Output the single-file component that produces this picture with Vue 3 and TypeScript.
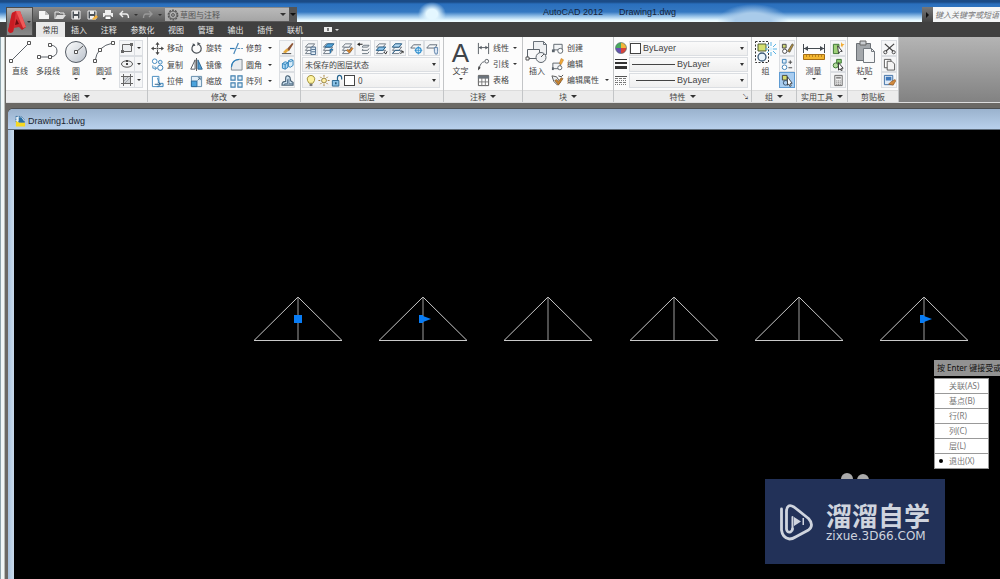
<script setup lang="ts">
import { ref } from 'vue'

interface Tool { label: string; icon: string; arrow?: boolean }

const tabs = ['插入', '注释', '参数化', '视图', '管理', '输出', '插件', '联机']

const quick = [
  { icon: 'new', label: '新建' },
  { icon: 'open', label: '打开' },
  { icon: 'save', label: '保存' },
  { icon: 'saveas', label: '另存为' },
  { icon: 'print', label: '打印' },
]

const drawTools: Tool[] = [
  { label: '直线', icon: 'line' },
  { label: '多段线', icon: 'pline' },
  { label: '圆', icon: 'circle', arrow: true },
  { label: '圆弧', icon: 'arc', arrow: true },
]
const shapeTools = [
  { icon: 'rect', label: '矩形' },
  { icon: 'ellipse', label: '椭圆' },
  { icon: 'hatch', label: '图案填充' },
]

const modifyTools: Tool[] = [
  { label: '移动', icon: 'move' },
  { label: '旋转', icon: 'rotate' },
  { label: '修剪', icon: 'trim', arrow: true },
  { label: '复制', icon: 'copy' },
  { label: '镜像', icon: 'mirror' },
  { label: '圆角', icon: 'fillet', arrow: true },
  { label: '拉伸', icon: 'stretch' },
  { label: '缩放', icon: 'scale' },
  { label: '阵列', icon: 'array', arrow: true },
]
const modifySide = [
  { icon: 'erase', label: '删除' },
  { icon: 'explode', label: '分解' },
  { icon: 'offset', label: '偏移' },
]

const layerGroups = [['layprops'], ['laycur'], ['laymatch', 'layprev'], ['layiso', 'layuniso'], ['layfreeze', 'layoff']]

const annotateTools: Tool[] = [
  { label: '线性', icon: 'linear', arrow: true },
  { label: '引线', icon: 'leader', arrow: true },
  { label: '表格', icon: 'table' },
]
const blockTools: Tool[] = [
  { label: '创建', icon: 'bcreate' },
  { label: '编辑', icon: 'bedit' },
  { label: '编辑属性', icon: 'battr', arrow: true },
]
const groupSide = ['ungroup', 'gedit', 'gselect']
const utilSide = ['qselect', 'selall', 'calc']
const clipSide = ['cut', 'copyclip', 'matchprop']

const apexes = [284, 409, 534, 660, 785, 910]
const grips = [
  { x: 284, arrow: false },
  { x: 409, arrow: true },
  { x: 910, arrow: true },
]

const options = ['关联(AS)', '基点(B)', '行(R)', '列(C)', '层(L)', '退出(X)']
const chosen = ref('退出(X)')
</script>

<template>
  <div class="window">
    <svg class="defs" aria-hidden="true">
      <defs>
        <linearGradient id="blade" x1="0" y1="0" x2="1" y2="1">
          <stop offset="0" stop-color="#f0444a" /><stop offset="1" stop-color="#b01319" />
        </linearGradient>
        <linearGradient id="disc" x1="0" y1="0" x2="1" y2="1">
          <stop offset="0" stop-color="#fff" /><stop offset="1" stop-color="#b9c0ca" />
        </linearGradient>
        <g id="stack" fill="#f4f7fa" stroke="#6d7782" stroke-width="1">
          <path d="M1.500 12.500l3-3.500h7l-3 3.500z" /><path d="M1.500 9l3-3.500h7L8.500 9z" /><path d="M1.500 5.500l3-3.500h7l-3 3.500z" />
        </g>
      </defs>
      <symbol id="logo" viewBox="0 0 18 24">
        <path d="M0 21L4 3l4-2h4l6 16-4 3-3-3-5 1-1 4-3 1z" fill="url(#blade)" />
        <path d="M0 21L4 3l4-2-3 21-3 1z" fill="#c91c23" />
        <path d="M8 1h4l6 16-3 1z" fill="#ef5a59" />
        <path d="M8.500 9l2.500 5-4 1z" fill="#6d0d11" />
      </symbol>
      <symbol id="new" viewBox="0 0 12 10"><path d="M1 1h6l4 4v4H1z" fill="#f4f4f4" /><path d="M7 1v4h4" fill="#bbb" /></symbol>
      <symbol id="open" viewBox="0 0 12 10"><path d="M1 9V2h4l1 1h4v2" fill="none" stroke="#e6e6e6" /><path d="M3 5h9L9 9H1z" fill="#dedede" /></symbol>
      <symbol id="save" viewBox="0 0 12 10"><path d="M2 1h8v8H2z" fill="#4b5157" stroke="#eee" /><path d="M4 1h4v3H4zM4 6h4v3H4z" fill="#eee" /></symbol>
      <symbol id="saveas" viewBox="0 0 12 10"><path d="M2 1h8v8H2z" fill="#4b5157" stroke="#eee" /><path d="M4 1h4v3H4zM4 6h4v3H4z" fill="#eee" /><path d="M6 9l4-4 2 2-4 3z" fill="#f2b03d" /></symbol>
      <symbol id="print" viewBox="0 0 12 10"><path d="M3 0h6v3H3zM1 3h10v4H1z" fill="#eee" /><path d="M3 6h6v3.500H3z" fill="#fff" stroke="#555" /></symbol>
      <symbol id="undo" viewBox="0 0 12 10"><path d="M5 1L2 4l3 3M2.500 4H8q2.500 0 2.500 4" fill="none" stroke="#eee" stroke-width="1.400" /></symbol>
      <symbol id="redo" viewBox="0 0 12 10"><path d="M7 1l3 3-3 3M9.500 4H4Q1.500 4 1.500 8" fill="none" stroke="#999" stroke-width="1.400" /></symbol>
      <symbol id="gear" viewBox="0 0 12 12"><circle cx="6" cy="6" r="4.800" fill="none" stroke="#555" stroke-width="1.200" stroke-dasharray="2 1" /><circle cx="6" cy="6" r="3.900" fill="none" stroke="#555" stroke-width=".8" /><circle cx="6" cy="6" r="1.400" fill="none" stroke="#555" /></symbol>

      <symbol id="line" viewBox="0 0 24 24"><path d="M3 21L21 3" stroke="#5c6269" fill="none" /><path d="M1.500 19.500h3v3h-3zM19.500 1.500h3v3h-3z" fill="#fff" stroke="#555" /></symbol>
      <symbol id="pline" viewBox="0 0 24 24"><path d="M3 17h12q6-1 6-6t-6-6" stroke="#5c6269" fill="none" /><path d="M1.500 15.500h3v3h-3zM12.500 15.500h3v3h-3zM12.500 3.500h3v3h-3z" fill="#fff" stroke="#555" /></symbol>
      <symbol id="circle" viewBox="0 0 24 24"><circle cx="12" cy="12" r="10.500" fill="url(#disc)" stroke="#555c65" /><path d="M12 12l7-6" stroke="#555" /><path d="M10.500 10.500h3v3h-3z" fill="#fff" stroke="#555" /></symbol>
      <symbol id="arc" viewBox="0 0 24 24"><path d="M3 21Q5 6 21 3" stroke="#5c6269" fill="none" /><path d="M1.500 19.500h3v3h-3zM6.500 8.500h3v3h-3zM19.500 1.500h3v3h-3z" fill="#fff" stroke="#555" /></symbol>
      <symbol id="rect" viewBox="0 0 14 12"><path d="M2.500 2.500h9v7h-9z" fill="#eceef0" stroke="#666" /><path d="M1 8h3v3H1zM10 1h3v3h-3z" fill="#666" /></symbol>
      <symbol id="ellipse" viewBox="0 0 14 12"><ellipse cx="7" cy="6" rx="5.500" ry="3.200" fill="#f2f3f4" stroke="#555" /><path d="M6 5h2v2H6zM6 2h2v2H6z" fill="#444" /></symbol>
      <symbol id="hatch" viewBox="0 0 14 12"><path d="M3 2h8v8H3z" fill="#d2d5d8" /><path d="M3.500 0v12M10.500 0v12M1 2.500h12M1 9.500h12" stroke="#666" fill="none" /><path d="M4 7l4-4M5 9l5-5" stroke="#8b9096" stroke-width=".7" /></symbol>

      <symbol id="move" viewBox="0 0 14 14"><path d="M7 2v10M2 7h10" stroke="#444" stroke-dasharray="3.500 3" /><path d="M7 0l2.200 3H4.800zM7 14l2.200-3H4.800zM0 7l3-2.200v4.400zM14 7l-3-2.200v4.400z" fill="#444" /><path d="M6 6h2v2H6z" fill="#444" /></symbol>
      <symbol id="rotate" viewBox="0 0 14 14"><path d="M5 2.500A5 5 0 1 0 10 3" fill="none" stroke="#4d5359" stroke-width="1.300" /><path d="M8 0v4L11.500 2zM6 4L3 1v3.500z" fill="#4d5359" /></symbol>
      <symbol id="trim" viewBox="0 0 14 14"><path d="M0 7h5" stroke="#2d78b4" stroke-width="1.300" /><path d="M8 7h6" stroke="#5b8fb5" stroke-dasharray="3 1" /><path d="M4 13L9 1" stroke="#4b89ba" stroke-width="1.300" /></symbol>
      <symbol id="copy" viewBox="0 0 14 14"><circle cx="4" cy="3.500" r="2.500" fill="#fff" stroke="#3e86bd" /><circle cx="10" cy="4.500" r="2" fill="#e3edf6" stroke="#3e86bd" /><circle cx="10" cy="10.500" r="2.800" fill="#fff" stroke="#2f78b2" /><path d="M2 8v3h4M4 9l2 2-2 2" fill="none" stroke="#3e86bd" /></symbol>
      <symbol id="mirror" viewBox="0 0 14 14"><path d="M5.500 2v10H.8z" fill="#fff" stroke="#4b5157" /><path d="M8.500 2v10h4.700z" fill="#4c9bd2" stroke="#2d648e" /><path d="M7 0v14" stroke="#555" /></symbol>
      <symbol id="fillet" viewBox="0 0 14 14"><path d="M1.500 13V10Q2 2 10 1.500h3V13z" fill="#e8ebee" stroke="#7b848c" /><path d="M1.500 10Q2 2 10 1.500" fill="none" stroke="#2b80bd" stroke-width="1.200" /></symbol>
      <symbol id="stretch" viewBox="0 0 14 14"><path d="M1.500 1.500h7v11h-7z" fill="#fff" stroke="#4389bd" /><path d="M7 3l2 6h4v3.500H6" fill="#dfeaf3" stroke="#337eb5" /><path d="M4 10h6M8 8l2 2-2 2" fill="none" stroke="#275f8a" /></symbol>
      <symbol id="scale" viewBox="0 0 14 14"><path d="M1.500 1.500h11v11h-11z" fill="#e3eff8" stroke="#5d87a8" /><path d="M1.500 6.500h6v6h-6z" fill="#4ba3dc" stroke="#2a6998" /><path d="M8 6l3-3M8.500 3H11v2.500" fill="none" stroke="#4c6e88" /></symbol>
      <symbol id="array" viewBox="0 0 14 14"><g fill="#e4eff7" stroke="#3e7eae" stroke-width="1.200"><path d="M1 1h4.500v4.500H1zM8.500 1H13v4.500H8.500zM1 8.500h4.500V13H1zM8.500 8.500H13V13H8.500z" /></g></symbol>
      <symbol id="erase" viewBox="0 0 14 14"><path d="M6 8l6-7 1.500 1-5 8z" fill="#8c5334" /><path d="M2 11l4-4 2.500 2L5 12z" fill="#e3a83b" /><path d="M1 12.500h10" stroke="#444" /></symbol>
      <symbol id="explode" viewBox="0 0 14 14"><path d="M1.500 6l3-2 3 1v5l-3 2-3-1z" fill="#a9d6f3" stroke="#2d82bb" /><path d="M8 3l3-1.500 2 1V8l-3 2-2-1z" fill="#d7ecf9" stroke="#2d82bb" /><path d="M1.500 6l3 1 3-2M4.500 7v5M8 3l2 1 3-1.500" fill="none" stroke="#2d82bb" /></symbol>
      <symbol id="offset" viewBox="0 0 14 14"><path d="M1 12h12V9q-3-.5-3-3.500T7.500 2 5 5v3q-4 0-4 4z" fill="#cfe4f3" stroke="#4b6478" stroke-width="1.200" /><path d="M4 12v-1.500h3V6q.8-1.500 1.500 0v4.500H13" fill="none" stroke="#55738c" /></symbol>

      <symbol id="layprops" viewBox="0 0 14 14"><use href="#stack" /><path d="M7.500 5.500h5v8h-5z" fill="#e5f0f8" stroke="#47698a" /><path d="M8 8h4M8 10.500h4" stroke="#47698a" /></symbol>
      <symbol id="laycur" viewBox="0 0 14 14"><use href="#stack" /><path d="M3 5.500l3-3.500h7l-3 3.500z" fill="#53a7dd" stroke="#27628f" /><path d="M9 12V8h3" fill="none" stroke="#2c78af" stroke-width="1.500" /></symbol>
      <symbol id="laymatch" viewBox="0 0 14 14"><use href="#stack" /><path d="M6 9l3 3 4-5-1-1-3 3-2-1z" fill="#d98a30" stroke="#8f5520" stroke-width=".6" /></symbol>
      <symbol id="layprev" viewBox="0 0 14 14"><path d="M5.500 5.500l1.500-2h6l-1.500 2zM5.500 9l1-1.500M5.500 9h6L13 7M5.500 12.500h6l1.500-2" fill="none" stroke="#65707a" /><path d="M0 2.500L3 .5V2h3v1H3v1.500z" fill="#222" /></symbol>
      <symbol id="layiso" viewBox="0 0 14 14"><use href="#stack" /><path d="M1.500 9l3-3.500h7L8.500 9z" fill="#8ec5ea" stroke="#27628f" /><path d="M10 11l1.500 2 1.500-3" fill="none" stroke="#222" /></symbol>
      <symbol id="layuniso" viewBox="0 0 14 14"><use href="#stack" /><path d="M1.500 5.500l3-3.500h7l-3 3.500z" fill="#b9dcf3" stroke="#27628f" /><path d="M1.500 12.500l3-3.500h5" fill="none" stroke="#27628f" /><path d="M10 13l3-3M11 10h2v2" fill="none" stroke="#222" /></symbol>
      <symbol id="layfreeze" viewBox="0 0 14 14"><path d="M.8 6.500l3-3.500h8" fill="none" stroke="#5d6772" /><path d="M.8 6.500h5" stroke="#5d6772" /><circle cx="9" cy="9" r="3" fill="#d8edfa" stroke="#2f8fce" stroke-width="1.200" /><path d="M9 4.500v9M4.800 9h8.500" stroke="#2f8fce" stroke-width=".8" /></symbol>
      <symbol id="layoff" viewBox="0 0 14 14"><path d="M.8 6.500l3-3.500h8l-2 3.500z" fill="#f6f8fa" stroke="#5d6772" /><path d="M9 6h3.500v4L12 13h-2l-1-3z" fill="#dce7f5" stroke="#5b80a8" /></symbol>
      <symbol id="bulb" viewBox="0 0 12 14"><path d="M4 10Q1.500 7 2 4.500 3 1.500 6 1.500t4 3Q10.500 7 8 10z" fill="#fdf2a0" stroke="#a08f35" /><path d="M4.500 10.500h3v2.500h-3z" fill="#777" /></symbol>
      <symbol id="sun" viewBox="0 0 12 14"><circle cx="6" cy="7" r="2.600" fill="#fff0a8" stroke="#8f7a38" /><path d="M6 1v2M6 11v2M0 7h2M10 7h2M2 3l1.300 1.300M10 3L8.700 4.300M2 11l1.300-1.300M10 11L8.700 9.700" stroke="#a37b2c" /></symbol>
      <symbol id="lock" viewBox="0 0 12 14"><path d="M1 7h7v6H1z" fill="#8cc4e8" stroke="#27658f" /><path d="M6.500 7V4q0-2.500 2.200-2.500T11 4v2" fill="none" stroke="#27658f" stroke-width="1.300" /><path d="M4 9h1.500v2H4z" fill="#164766" /></symbol>

      <symbol id="linear" viewBox="0 0 14 14"><path d="M1.500 1v12M12.500 1v12M2 6h10" stroke="#555b61" /><path d="M2 6l3-2v4zM12 6L9 4v4z" fill="#555b61" /></symbol>
      <symbol id="leader" viewBox="0 0 14 14"><path d="M2 12Q4 4 8 4" fill="none" stroke="#555b61" /><circle cx="10.500" cy="3.500" r="2" fill="#fff" stroke="#555b61" /><path d="M1 13.500L1.500 9l2.500 1.500z" fill="#444" /></symbol>
      <symbol id="table" viewBox="0 0 14 14"><path d="M1.500 1.500h11v11h-11z" fill="#fff" stroke="#555" /><path d="M1 2h12v3H1z" fill="#6b737b" /><path d="M1 8.500h12M5.200 4v9M9 4v9" stroke="#777" /></symbol>
      <symbol id="insert" viewBox="0 0 24 24"><path d="M8.500 1.500h10l3 3v10h-13z" fill="#eef0f2" stroke="#6a727a" /><path d="M18.500 1.500v3h3" fill="none" stroke="#6a727a" /><path d="M2.500 9.500h12v9h-12z" fill="#f8f9fa" stroke="#5d656d" /><circle cx="16" cy="17.500" r="5" fill="#f1f3f5" stroke="#5d656d" /><path d="M1 17h3v3H1zM16 17l3-3" fill="#fff" stroke="#555" /></symbol>
      <symbol id="bcreate" viewBox="0 0 14 14"><path d="M3 2.500h9v6H3z" fill="#f2f4f6" stroke="#5b636b" /><circle cx="10" cy="9.500" r="2.700" fill="#fff" stroke="#5b636b" /><path d="M1 8h3v3H1z" fill="#5b636b" /></symbol>
      <symbol id="bedit" viewBox="0 0 14 14"><path d="M2 5.500h8v6H2z" fill="#f2f4f6" stroke="#5b636b" /><circle cx="9.500" cy="10.500" r="2.200" fill="#fff" stroke="#5b636b" /><path d="M1 10h2v3H1z" fill="#5b636b" /><path d="M9 6l2-5.500L13.500 2 11 7z" fill="#f0ab38" stroke="#bd7420" stroke-width=".6" /></symbol>
      <symbol id="battr" viewBox="0 0 14 14"><path d="M1 2l5 1 4 6-3 3-4-4z" fill="#eceff1" stroke="#555" /><path d="M4 7l4 5 5-7-2-1-3 4-2-2z" fill="#c5812f" stroke="#6d4a22" stroke-width=".6" /><path d="M8 2l3 1 2-2" fill="none" stroke="#444" /></symbol>

      <symbol id="wheel" viewBox="0 0 12 12"><path d="M6 6V.5A5.500 5.500 0 0 1 11.500 6z" fill="#f1b53a" /><path d="M6 6h5.500A5.500 5.500 0 0 1 6 11.500z" fill="#d9433a" /><path d="M6 6v5.500A5.500 5.500 0 0 1 .5 6z" fill="#6753ae" /><path d="M6 6H.5A5.500 5.500 0 0 1 6 .5z" fill="#49a95d" /><circle cx="6" cy="6" r="5.500" fill="none" stroke="#466" stroke-width=".6" /></symbol>
      <symbol id="weights" viewBox="0 0 12 12"><path d="M0 1.500h12" stroke="#333" /><path d="M0 5h12" stroke="#333" stroke-width="2" /><path d="M0 9.500h12" stroke="#333" stroke-width="3" /></symbol>
      <symbol id="ltypes" viewBox="0 0 12 12"><path d="M0 2.500h12" stroke="#555" /><path d="M0 4.500h12M0 8.500h12" stroke="#777" stroke-dasharray="3 1" /><path d="M0 6.500h12M0 10.500h12" stroke="#777" stroke-dasharray="1 1" /></symbol>

      <symbol id="group" viewBox="0 0 24 24"><path d="M1.500 1.500h13v21h-13z" fill="none" stroke="#333" stroke-dasharray="2 1.500" /><path d="M4 4h8v7H4z" fill="#d5df6f" stroke="#4e5d33" /><circle cx="8" cy="17" r="4" fill="#eaf4fb" stroke="#3a5875" stroke-width="1.300" /><path d="M17 2v4M17 12v4M11 9h3M19 9h4M19 7l3-3M19 11l3 3M15 7l-2-3M15 11l-2 2" stroke="#58b2e4" /><circle cx="17" cy="9" r="1.800" fill="#d9f1fd" /></symbol>
      <symbol id="ungroup" viewBox="0 0 14 14"><path d="M1.500 2.500h4v4h-4z" fill="#cfd877" stroke="#444" /><circle cx="4" cy="10" r="2.300" fill="#fff" stroke="#444" /><path d="M7 10l5-8 1.500 1-4 8z" fill="#b29140" stroke="#333" stroke-width=".6" /></symbol>
      <symbol id="gedit" viewBox="0 0 14 14"><path d="M1.500 1.500h4v4h-4z" fill="#dfeefa" stroke="#3d80b4" /><circle cx="3.800" cy="10" r="2.500" fill="#fff" stroke="#3d80b4" /><path d="M8 4.500h4M10 2.500v4M8 10.500h4" stroke="#444" /></symbol>
      <symbol id="gselect" viewBox="0 0 14 14"><path d="M1.500 1.500h5v5h-5z" fill="#d4d96b" stroke="#444" /><circle cx="5" cy="9.500" r="2.500" fill="none" stroke="#38516a" /><path d="M7 3l5 7-2 .2 1 2.500-1.500.6-1-2.500L7 12z" fill="#fff" stroke="#222" stroke-width=".8" /></symbol>
      <symbol id="measure" viewBox="0 0 24 24"><path d="M1.500 4v9M22.500 4v9M2 8.500h20" stroke="#454b51" /><path d="M2 8.500l4-2.500v5zM22 8.500L18 6v5z" fill="#454b51" /><path d="M1.500 14.500h21v5h-21z" fill="#f2b52f" stroke="#a56d13" /><path d="M4.500 15v2M7.500 15v2M10.500 15v2M13.500 15v2M16.500 15v2M19.500 15v2" stroke="#9c6a18" stroke-width=".7" /></symbol>
      <symbol id="qselect" viewBox="0 0 14 14"><path d="M1.500 2.500h6v10h-6z" fill="#9ed178" stroke="#38722f" /><path d="M6 4l5 6-2 .2L7 12z" fill="#fff" stroke="#333" /><path d="M10 0l1 2 2.500.5-2 1.500-.5 2-1.500-2z" fill="#f2ad36" /></symbol>
      <symbol id="selall" viewBox="0 0 14 14"><path d="M5 1.500h5v4H5z" fill="#8dcb74" stroke="#38722f" /><circle cx="4" cy="8" r="2.700" fill="#b5dd9f" stroke="#38722f" /><path d="M7 5l5 6-2 .2 1 2-1 .5-1.200-2L7 13z" fill="#fff" stroke="#333" /></symbol>
      <symbol id="calc" viewBox="0 0 14 14"><path d="M3 1.500h8v11H3z" fill="#f1f1f1" stroke="#666" /><path d="M4.500 3h5v2h-5z" fill="#888" /><path d="M4.500 7.500h5M4.500 9.500h5M4.500 11.200h5" stroke="#777" stroke-dasharray="1.300 .6" /></symbol>
      <symbol id="paste" viewBox="0 0 24 24"><path d="M3.500 3.500h14v17h-14z" fill="#a3a7ab" stroke="#6c7176" /><path d="M7 1h6v4H7z" fill="#c9ccd0" stroke="#666" /><path d="M10.500 8.500h8l3 3v11h-11z" fill="#f5f6f7" stroke="#73797f" /><path d="M18.500 8.500v3h3" fill="none" stroke="#73797f" /></symbol>
      <symbol id="cut" viewBox="0 0 14 14"><path d="M2 2l9 8M12 2l-9 8" stroke="#444" stroke-width="1.300" /><circle cx="2.500" cy="11" r="1.700" fill="none" stroke="#444" /><circle cx="11.500" cy="11" r="1.700" fill="none" stroke="#444" /></symbol>
      <symbol id="copyclip" viewBox="0 0 14 14"><path d="M1.500 1.500h7v9h-7z" fill="#fff" stroke="#555" /><path d="M4.500 3.500h5l3 3v6.500h-8z" fill="#f4f4f4" stroke="#555" /></symbol>
      <symbol id="matchprop" viewBox="0 0 14 14"><path d="M1.500 1.500h9v10h-9z" fill="#dfeaf6" stroke="#3a6ca3" /><path d="M3 3h6v4H3z" fill="#3f79bb" /><path d="M6 11l3-3 4-2 1 1-3 5z" fill="#d18a3e" stroke="#7d4b1d" stroke-width=".6" /></symbol>
      <symbol id="docicon" viewBox="0 0 12 12"><path d="M1 1h6l3 3v3H1z" fill="#e8f0f7" stroke="#39719f" stroke-dasharray="2 1" /><path d="M4 2h3l4 6H4z" fill="#2b6fa5" /><path d="M1 6l4 2h6v4H1z" fill="#f6d822" /></symbol>
    </svg>

    <header class="top">
      <button class="app" aria-label="应用程序菜单"><svg><use href="#logo" /></svg><i class="tri"></i></button>
      <div class="top-main">
        <div class="titlebar">
          <div class="quick">
            <button v-for="q in quick" :key="q.icon" :aria-label="q.label"><svg><use :href="'#' + q.icon" /></svg></button>
            <button aria-label="放弃"><svg><use href="#undo" /></svg></button>
            <button class="mini" aria-label="放弃列表"><i class="tri"></i></button>
            <button aria-label="重做"><svg><use href="#redo" /></svg></button>
            <button class="mini" aria-label="重做列表"><i class="tri"></i></button>
            <label class="workspace">
              <svg><use href="#gear" /></svg>
              <select aria-label="工作空间"><option>草图与注释</option></select>
              <i class="tri"></i>
            </label>
            <button class="mini more" aria-label="自定义快速访问工具栏"><i class="tri"></i></button>
          </div>
          <h1><span>AutoCAD 2012</span><span>Drawing1.dwg</span></h1>
          <div class="search">
            <button aria-label="展开搜索"><i class="side"></i></button>
            <input type="text" aria-label="搜索" placeholder="键入关键字或短语" />
          </div>
        </div>
        <nav class="tabs">
          <button class="active">常用</button>
          <div class="rest"><button v-for="t in tabs" :key="t">{{ t }}</button></div>
          <button class="toggle" aria-label="最小化功能区"><span class="pill"></span><i class="tri"></i></button>
        </nav>
      </div>
    </header>

    <div class="ribbon">
      <section class="panel draw">
        <div class="body">
          <button v-for="t in drawTools" :key="t.label" class="big"><svg><use :href="'#' + t.icon" /></svg><span>{{ t.label }}</span><i v-if="t.arrow" class="tri small"></i></button>
          <div class="side-col split">
            <button v-for="s in shapeTools" :key="s.icon" class="framed" :aria-label="s.label"><svg><use :href="'#' + s.icon" /></svg><b><i class="tri small"></i></b></button>
          </div>
        </div>
        <button class="foot">绘图<i class="tri"></i></button>
      </section>

      <section class="panel modify">
        <div class="body">
          <div class="grid3">
            <button v-for="t in modifyTools" :key="t.label" class="tool"><svg><use :href="'#' + t.icon" /></svg><span>{{ t.label }}</span><i v-if="t.arrow" class="tri small"></i></button>
          </div>
          <div class="side-col">
            <button v-for="s in modifySide" :key="s.icon" class="framed" :aria-label="s.label"><svg><use :href="'#' + s.icon" /></svg></button>
          </div>
        </div>
        <button class="foot">修改<i class="tri"></i></button>
      </section>

      <section class="panel layer">
        <div class="body rows">
          <div class="icon-row">
            <div v-for="(g, i) in layerGroups" :key="i" class="icon-group">
              <button v-for="n in g" :key="n" class="framed" :aria-label="n"><svg><use :href="'#' + n" /></svg></button>
            </div>
          </div>
          <label class="combo"><select aria-label="图层状态"><option>未保存的图层状态</option></select><i class="tri"></i></label>
          <label class="combo icons">
            <svg><use href="#bulb" /></svg><svg><use href="#sun" /></svg><svg><use href="#lock" /></svg><em class="swatch"></em>
            <select aria-label="图层"><option>0</option></select><i class="tri"></i>
          </label>
        </div>
        <button class="foot">图层<i class="tri"></i></button>
      </section>

      <section class="panel annotate">
        <div class="body">
          <button class="big wide"><strong>A</strong><span>文字</span><i class="tri small"></i></button>
          <div class="list">
            <button v-for="t in annotateTools" :key="t.label" class="tool"><svg><use :href="'#' + t.icon" /></svg><span>{{ t.label }}</span><i v-if="t.arrow" class="tri small"></i></button>
          </div>
        </div>
        <button class="foot">注释<i class="tri"></i></button>
      </section>

      <section class="panel block">
        <div class="body">
          <button class="big"><svg><use href="#insert" /></svg><span>插入</span></button>
          <div class="list">
            <button v-for="t in blockTools" :key="t.label" class="tool"><svg><use :href="'#' + t.icon" /></svg><span>{{ t.label }}</span><i v-if="t.arrow" class="tri small"></i></button>
          </div>
        </div>
        <button class="foot">块<i class="tri"></i></button>
      </section>

      <section class="panel props">
        <div class="body rows">
          <div class="prop"><svg><use href="#wheel" /></svg><label class="combo"><em class="swatch"></em><select aria-label="颜色"><option>ByLayer</option></select><i class="tri"></i></label></div>
          <div class="prop"><svg><use href="#weights" /></svg><label class="combo"><em class="rule"></em><select aria-label="线宽"><option>ByLayer</option></select><i class="tri"></i></label></div>
          <div class="prop"><svg><use href="#ltypes" /></svg><label class="combo"><em class="rule short"></em><select aria-label="线型"><option>ByLayer</option></select><i class="tri"></i></label></div>
        </div>
        <button class="foot">特性<i class="tri"></i><span class="launcher">↘</span></button>
      </section>

      <section class="panel group">
        <div class="body">
          <button class="big"><svg><use href="#group" /></svg><span>组</span></button>
          <div class="side-col"><button v-for="s in groupSide" :key="s" class="framed" :class="{ on: s === 'gselect' }" :aria-label="s"><svg><use :href="'#' + s" /></svg></button></div>
        </div>
        <button class="foot">组<i class="tri"></i></button>
      </section>

      <section class="panel util">
        <div class="body">
          <button class="big wide"><svg><use href="#measure" /></svg><span>测量</span><i class="tri small"></i></button>
          <div class="side-col"><button v-for="s in utilSide" :key="s" class="framed" :aria-label="s"><svg><use :href="'#' + s" /></svg></button></div>
        </div>
        <button class="foot">实用工具<i class="tri"></i></button>
      </section>

      <section class="panel clip">
        <div class="body">
          <button class="big wide"><svg><use href="#paste" /></svg><span>粘贴</span><i class="tri small"></i></button>
          <div class="side-col"><button v-for="s in clipSide" :key="s" class="framed" :aria-label="s"><svg><use :href="'#' + s" /></svg></button></div>
        </div>
        <button class="foot">剪贴板</button>
      </section>
    </div>

    <main class="doc">
      <div class="doc-title"><svg><use href="#docicon" /></svg><h2>Drawing1.dwg</h2></div>
      <div class="canvas">
        <svg class="drawing">
          <g v-for="x in apexes" :key="x" class="shape">
            <path :d="`M${x - 44} 210.500H${x + 44}L${x} 167Z`" />
            <path class="axis" :d="`M${x} 167V210`" />
          </g>
          <g v-for="g in grips" :key="g.x" class="grip">
            <path v-if="g.arrow" :d="`M${g.x - 4} 185h4v1l8 3-8 3v1h-4z`" />
            <path v-else :d="`M${g.x - 4} 185h8v8h-8z`" />
          </g>
        </svg>

        <div class="prompt">按 Enter 键接受或</div>
        <fieldset class="menu">
          <label v-for="o in options" :key="o"><input v-model="chosen" type="radio" name="opt" :value="o" /><span>{{ o }}</span></label>
        </fieldset>

        <div class="ears"><i></i><i></i></div>
        <div class="brand">
          <svg viewBox="0 0 36 38">
            <g fill="none" stroke="#cfd4de" stroke-linecap="round" stroke-linejoin="round">
              <path d="M2.500 6v21q1 8 8 9 3 0 6-2l13-7q6-5 0-11.500L15 4q-7-4-7.500 4v18q.5 4 4 3 2-1 2-3" stroke-width="2.800" />
              <path d="M13.500 26V14" stroke-width="2" />
            </g>
            <path d="M15 14l7 4.500-7 4.500zM23.500 15h1.500v7h-1.500z" fill="#cfd4de" />
          </svg>
          <div><strong>溜溜自学</strong><span>zixue.3D66.COM</span></div>
        </div>
      </div>
    </main>
  </div>
</template>

<style>
body { margin: 0; background: #000; overflow: hidden; }
</style>

<style scoped>
.window {
  display: flex; flex-direction: column; min-height: 100vh; box-sizing: border-box;
  padding-left: 6px; font: 8px/12px "Noto Sans", "Noto Sans CJK SC", sans-serif; color: #444;
  background: linear-gradient(90deg, #8fa5ad 0 1px, #f1f7f7 1px 4px, #b9bdb8 4px 5px, #6c6a66 5px 6px, #6b6965 6px);
}
.defs { position: absolute; width: 0; height: 0; }
button, select, input { font: inherit; color: inherit; margin: 0; padding: 0; border: 0; background: none; border-radius: 0; }
button { display: flex; align-items: center; justify-content: center; white-space: nowrap; }
select { appearance: none; outline: 0; flex: 1; min-width: 0; }
svg { display: block; flex: none; }
.tri { width: 0; height: 0; flex: none; border: 3px solid transparent; border-top-color: #333; border-bottom: 0; }
.tri.small { border-width: 2px; border-bottom: 0; }

.top { display: flex; margin-left: -6px; padding-left: 6px; height: 37px; background: linear-gradient(180deg, #1b4b86 0 2px, #2a6fbd 4px, #3579c2 12px, #8fbde6 16px, #e2f6ff 20px, #f2fdff 22px, #404040 22px); }
.app { width: 27px; height: 29px; margin-top: 7px; box-sizing: border-box; border: 1px solid #4b4b4b; gap: 1px; background: linear-gradient(#b5b5b5, #777 60%, #8a8a8a); }
.app svg { width: 18px; height: 24px; }
.app .tri { border-width: 2px; border-bottom: 0; }
.top-main { flex: 1; min-width: 0; }
.titlebar { display: flex; height: 22px; background: radial-gradient(ellipse 14px 12px at 399px 14px, #e4f7ff 40%, transparent), radial-gradient(ellipse 36px 18px at 720px 22px, #a9cbea 50%, transparent); }
.quick { display: flex; align-items: center; width: 264px; height: 15px; margin-top: 7px; background: linear-gradient(#8b8b8b, #595959); }
.quick button { width: 16px; height: 14px; }
.quick button:first-child { margin-left: 3px; }
.quick button svg { width: 12px; height: 10px; }
.quick button.mini { width: 8px; }
.quick .mini .tri { border-width: 2px; border-bottom: 0; }
.workspace { display: flex; align-items: center; flex: 1; height: 13px; margin-left: 1px; padding: 0 3px 0 2px; gap: 1px; background: linear-gradient(#b9b9b9, #a5a5a5); color: #555; }
.workspace svg { width: 12px; height: 12px; }
.quick .more { background: #555; height: 15px; width: 10px; }
.quick .more .tri { border-width: 3px; border-bottom: 0; border-top-color: #111; }
h1 { flex: 1; display: flex; justify-content: center; gap: 16px; margin: 0; padding-top: 5px; font: 400 9px/14px "Liberation Sans", sans-serif; color: #14223a; }
.search { display: flex; width: 78px; height: 15px; margin-top: 7px; background: #f4f6f7; }
.search button { width: 11px; background: linear-gradient(#777, #444); }
.side { border: 3px solid transparent; border-left-color: #111; border-right: 0; }
.search input { flex: 1; min-width: 0; padding-left: 2px; font-style: italic; color: #666; outline: 0; }
.search input::placeholder { color: #777; opacity: 1; }
.tabs { display: flex; height: 15px; padding-left: 3px; color: #e8e8e8; }
.tabs .active { width: 29px; background: #e9e9e9; color: #333; }
.tabs .rest { display: flex; justify-content: space-between; width: 244px; }
.tabs .rest button { padding: 0 6px; }
.tabs .toggle { gap: 3px; margin-left: 15px; }
.pill { width: 8px; height: 5px; border-radius: 1px; background: #777; box-shadow: inset 3px 0 #ececec, inset -3px 0 #ececec, inset 0 1px #ececec, inset 0 -1px #ececec; }
.tabs .toggle .tri { border-width: 2px; border-bottom: 0; border-top-color: #ddd; }

.ribbon { display: flex; height: 66px; background: linear-gradient(#b4b4b4, #828282); border-bottom: 1px solid #ddd; box-sizing: border-box; }
.panel { display: flex; flex-direction: column; flex: none; box-sizing: border-box; border-right: 1px solid #c3c5c7; background: #fcfcfc; }
.body { display: flex; flex: 1; padding: 3px 3px 0 0; }
.foot { height: 12px; gap: 4px; border-top: 1px solid #dcdcdc; background: #ececec; position: relative; }
.draw { width: 142px; } .modify { width: 153px; } .layer { width: 143px; } .annotate { width: 79px; }
.block { width: 91px; } .props { width: 138px; } .group { width: 45px; } .util { width: 51px; } .clip { width: 51px; }
.big { flex-direction: column; justify-content: flex-start; width: 28px; height: 48px; }
.big.wide { width: 33px; }
.big svg { width: 24px; height: 24px; }
.big span { height: 13px; line-height: 13px; }
.big .tri { margin-top: 1px; }
.big strong { height: 24px; font: 400 26px/26px "Liberation Sans", sans-serif; color: #3f444a; }
.side-col { display: flex; flex-direction: column; margin-left: auto; }
.framed { width: 16px; height: 16px; box-sizing: border-box; border: 1px solid #dbdee2; background: #f5f6f7; }
.framed svg { width: 13px; height: 13px; }
.split { margin-right: 1px; }
.split .framed { width: 24px; }
.split .framed svg { height: 12px; width: 14px; }
.split b { display: flex; align-items: center; justify-content: center; width: 8px; height: 14px; border-left: 1px solid #dbdee2; }
.framed.on { border-color: #5f9bd2; background: #a9cdf0; }
.grid3 { display: grid; grid-template-columns: 39px 40px 46px; padding-left: 3px; }
.tool { height: 16px; gap: 3px; justify-content: flex-start; }
.tool svg { width: 13px; height: 13px; }
.tool .tri { margin-left: 3px; }
.grid3 + .side-col { margin-right: 2px; }
.list { display: flex; flex-direction: column; }
.annotate .list .tool .tri { margin-left: 1px; }
.body.rows { flex-direction: column; padding: 3px 3px 0 1px; }
.layer .rows { gap: 1px; }
.icon-row { display: flex; justify-content: space-between; }
.icon-group { display: flex; }
.combo { display: flex; align-items: center; flex: 1; height: 15px; box-sizing: border-box; padding: 0 3px 0 2px; border: 1px solid #dbdee2; background: linear-gradient(#fafafa, #efefef); }
.layer .combo { flex: none; }
.combo .tri { border-width: 2px; border-bottom: 0; border-top-width: 3px; }
.icons { gap: 1px; }
.icons svg { width: 12px; height: 13px; }
.swatch { width: 9px; height: 9px; border: 1px solid #444; background: #fff; margin-right: 2px; }
.prop { display: flex; align-items: center; height: 16px; gap: 2px; font: 9px/12px "Liberation Sans", sans-serif; }
.prop svg { width: 12px; height: 12px; }
.props .swatch { margin-left: -2px; }
.rule { width: 43px; border-top: 1px solid #444; margin-right: 2px; }
.rule.short { width: 39px; margin-left: 4px; }
.launcher { position: absolute; right: 2px; top: 0; font-size: 7px; line-height: 11px; }
.group .side-col, .util .side-col, .clip .side-col { margin-right: -2px; }

.doc { flex: 1; display: flex; flex-direction: column; margin: 6px 0 0 2px; padding-left: 6px; border-top-left-radius: 5px; background: linear-gradient(90deg, #a9c3de, #c6d8ea 5px); overflow: hidden; box-shadow: 0 -1px #4c4f52; }
.doc-title { display: flex; align-items: center; gap: 2px; height: 21px; margin-left: -6px; padding: 3px 0 0 7px; box-sizing: border-box; background: linear-gradient(#9ab2cd, #b8d0ec); border-bottom: 1px solid #5d6b7a; }
.doc-title svg { width: 11px; height: 12px; }
.doc-title h2 { margin: 0; font: 400 9px/12px "Liberation Sans", sans-serif; color: #1c2530; }
.canvas { position: relative; flex: 1; background: #000; overflow: hidden; }
.drawing { position: absolute; inset: 0; width: 100%; height: 100%; }
.shape path { fill: none; stroke: #c9c9c9; stroke-width: 1; }
.shape .axis { stroke: #9c9c9c; }
.grip path { fill: #087cf5; }
.prompt { position: absolute; left: 920px; right: 0; top: 230px; height: 16px; padding-left: 3px; overflow: hidden; white-space: nowrap; line-height: 15px; color: #111; background: #929292; }
.menu { position: absolute; left: 920px; top: 248px; width: 55px; box-sizing: border-box; margin: 0; padding: 0; border: 1px solid #999; border-bottom: 0; background: #fff; color: #777; min-width: 0; }
.menu label { display: flex; align-items: center; height: 14px; border-bottom: 1px solid #999; }
.menu input { appearance: none; width: 4px; height: 4px; margin: 0 6px 0 4px; border-radius: 50%; }
.menu input:checked { background: #000; }
.ears { position: absolute; left: 827px; top: 343px; display: flex; gap: 4px; }
.ears i { width: 12px; height: 12px; border-radius: 50%; background: #aaa; }
.ears i + i { margin-top: 1px; }
.brand { position: absolute; left: 751px; top: 349px; width: 180px; height: 85px; box-sizing: border-box; padding-left: 14px; display: flex; align-items: center; gap: 11px; background: #223158; color: #cfd4de; }
.brand svg { width: 36px; height: 38px; }
.brand div { display: flex; flex-direction: column; white-space: nowrap; }
.brand strong { font: 700 26px/28px "Noto Sans CJK SC", sans-serif; }
.brand span { font: 12px/14px "DejaVu Sans", sans-serif; }
</style>
